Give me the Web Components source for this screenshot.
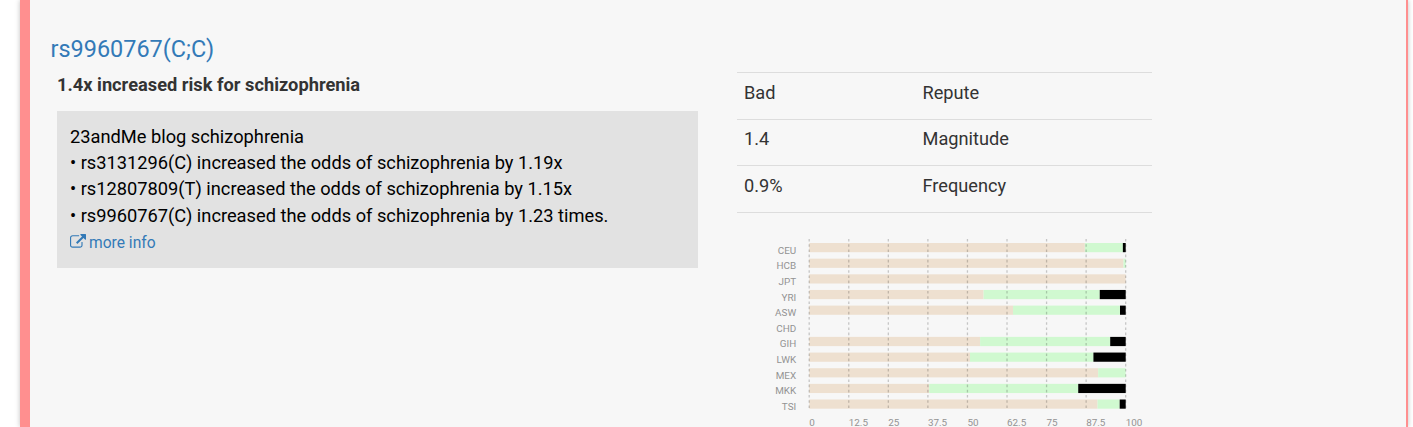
<!DOCTYPE html>
<html lang="en">
<head>
<meta charset="utf-8">
<title>rs9960767(C;C)</title>
<style>
    body {
        margin: 0;
        background: #fff;
        color: #333;
        font-family: Roboto, sans-serif;
        font-size: 18.250px;
        overflow: hidden;
    }
</style>
</head>
<body>
<genotype-card name="rs9960767(C;C)" summary="1.4x increased risk for schizophrenia">
    <genotype-notes slot="notes">23andMe blog schizophrenia<br>
        • rs3131296(C) increased the odds of schizophrenia by 1.19x<br>
        • rs12807809(T) increased the odds of schizophrenia by 1.15x<br>
        • rs9960767(C) increased the odds of schizophrenia by 1.23 times.</genotype-notes>
    <genotype-facts slot="facts"></genotype-facts>
    <population-chart slot="facts"></population-chart>
</genotype-card>

<script>
class GenotypeCard extends HTMLElement {
    constructor() {
        super();
        this.attachShadow({ mode: 'open' });
    }

    connectedCallback() {
        this.shadowRoot.innerHTML = `
            <style>
                :host {
                    display: flex;
                    box-sizing: border-box;
                    height: 427px;
                    margin: 0 5px 0 20px;
                    padding-left: 27px;
                    background: #f7f7f7;
                    border-left: 10px solid #ff8f8f;
                    border-right: 2px solid #ff8f8f;
                    box-shadow: 0 0 5px rgba(0, 0, 0, .25);
                }
                .main { width: 641px; }
                .side { width: 415px; margin-left: 39px; padding-top: 72px; }
                h2 {
                    margin: 35px 0 0 -6.500px;
                    font-size: 23.450px;
                    font-weight: 400;
                    line-height: 28px;
                    color: #337ab7;
                }
                .summary {
                    margin: 9px 0 13px;
                    font-weight: 700;
                    line-height: 26px;
                }
            </style>
            <div class="main">
                <h2>${this.getAttribute('name')}</h2>
                <p class="summary">${this.getAttribute('summary')}</p>
                <slot name="notes"></slot>
            </div>
            <div class="side"><slot name="facts"></slot></div>
        `;
    }
}

class GenotypeNotes extends HTMLElement {
    constructor() {
        super();
        this.attachShadow({ mode: 'open' });
    }

    connectedCallback() {
        this.shadowRoot.innerHTML = `
            <style>
                :host {
                    display: block;
                    box-sizing: border-box;
                    height: 157px;
                    padding: 13px;
                    background: #e2e2e2;
                    color: #000;
                    line-height: 26.200px;
                }
                a {
                    display: flex;
                    align-items: center;
                    gap: 3px;
                    padding-top: 1px;
                    color: #337ab7;
                    font-size: 15.600px;
                    text-decoration: none;
                }
                svg { display: block; margin-top: -1px; }
            </style>
            <slot></slot>
            <a href="#">
                <svg width="16" height="16" viewBox="0 64 1792 1664" fill="currentColor">
                    <path d="M1408 928v320q0 119-84.500 203.500t-203.500 84.500h-832q-119 0-203.500-84.500t-84.500-203.500v-832q0-119 84.500-203.500t203.500-84.500h704q14 0 23 9t9 23v64q0 14-9 23t-23 9h-704q-66 0-113 47t-47 113v832q0 66 47 113t113 47h832q66 0 113-47t47-113v-320q0-14 9-23t23-9h64q14 0 23 9t9 23zm384-864v512q0 26-19 45t-45 19-45-19l-176-176-652 652q-10 10-23 10t-23-10l-114-114q-10-10-10-23t10-23l652-652-176-176q-19-19-19-45t19-45 45-19h512q26 0 45 19t19 45z"/>
                </svg>
                <span>more info</span>
            </a>
        `;
    }
}

class GenotypeFacts extends HTMLElement {
    constructor() {
        super();
        this.attachShadow({ mode: 'open' });
    }

    connectedCallback() {
        const facts = [
            ['Bad', 'Repute'],
            ['1.4', 'Magnitude'],
            ['0.9%', 'Frequency']
        ];
        this.shadowRoot.innerHTML = `
            <style>
                :host { display: block; border-bottom: 1px solid #ddd; }
                .row {
                    display: grid;
                    grid-template-columns: 178.500px 1fr;
                    box-sizing: border-box;
                    height: 46.670px;
                    padding: 6.700px 7px 0;
                    border-top: 1px solid #ddd;
                    font-size: 18.200px;
                    line-height: 26px;
                }
            </style>
            ${facts.map(([value, label]) => `<div class="row"><span>${value}</span><span>${label}</span></div>`).join('')}
        `;
    }
}

// Share of each genotype by population: [label, end of beige, end of green, end of black]
const POPULATIONS = [
    ['CEU', 87.1, 99.1, 100],
    ['HCB', 99.3, 100],
    ['JPT', 100],
    ['YRI', 55.1, 91.8, 100],
    ['ASW', 64.4, 98.2, 100],
    ['CHD'],
    ['GIH', 54, 95.1, 100],
    ['LWK', 50.8, 89.8, 100],
    ['MEX', 91.3, 100],
    ['MKK', 37.9, 85, 100],
    ['TSI', 91.1, 98.1, 100]
];

class PopulationChart extends HTMLElement {
    constructor() {
        super();
        this.attachShadow({ mode: 'open' });
    }

    connectedCallback() {
        const left = 72.2;
        const width = 316.5;
        const step = 15.65;
        const x = value => left + value * width / 100;
        const colors = ['#eee0d0', '#d0f9d0', '#000'];
        let bars = '';
        let blackBars = '';
        let labels = '';
        let grid = '';

        POPULATIONS.forEach(([name, ...ends], i) => {
            const y = 30 + i * step;
            let start = 0;
            ends.forEach((end, n) => {
                const bar = `<rect x="${x(start)}" y="${y}" width="${x(end) - x(start)}" height="9.2" fill="${colors[n]}"/>`;
                if (n === 2) {
                    blackBars += bar;
                } else {
                    bars += bar;
                }
                start = end;
            });
            labels += `<text x="59.200" y="${Math.floor(41.2 + i * 15.6)}" text-anchor="end">${name}</text>`;
        });

        for (let value = 0; value <= 100; value += 12.5) {
            grid += `<line x1="${x(value)}" x2="${x(value)}" y1="26" y2="196"/>`;
            labels += `<text x="${x(value)}" y="213">${value}</text>`;
        }

        this.shadowRoot.innerHTML = `
            <style>
                :host { display: block; }
                svg { display: block; }
                line { stroke: rgba(0, 0, 0, .2); stroke-width: 1.300px; stroke-dasharray: 2.600px; }
                text { fill: #939393; font-size: 9.900px; }
            </style>
            <svg width="415" height="214">${bars}${grid}${blackBars}${labels}</svg>
        `;
    }
}

customElements.define('genotype-card', GenotypeCard);
customElements.define('genotype-notes', GenotypeNotes);
customElements.define('genotype-facts', GenotypeFacts);
customElements.define('population-chart', PopulationChart);
</script>
</body>
</html>
